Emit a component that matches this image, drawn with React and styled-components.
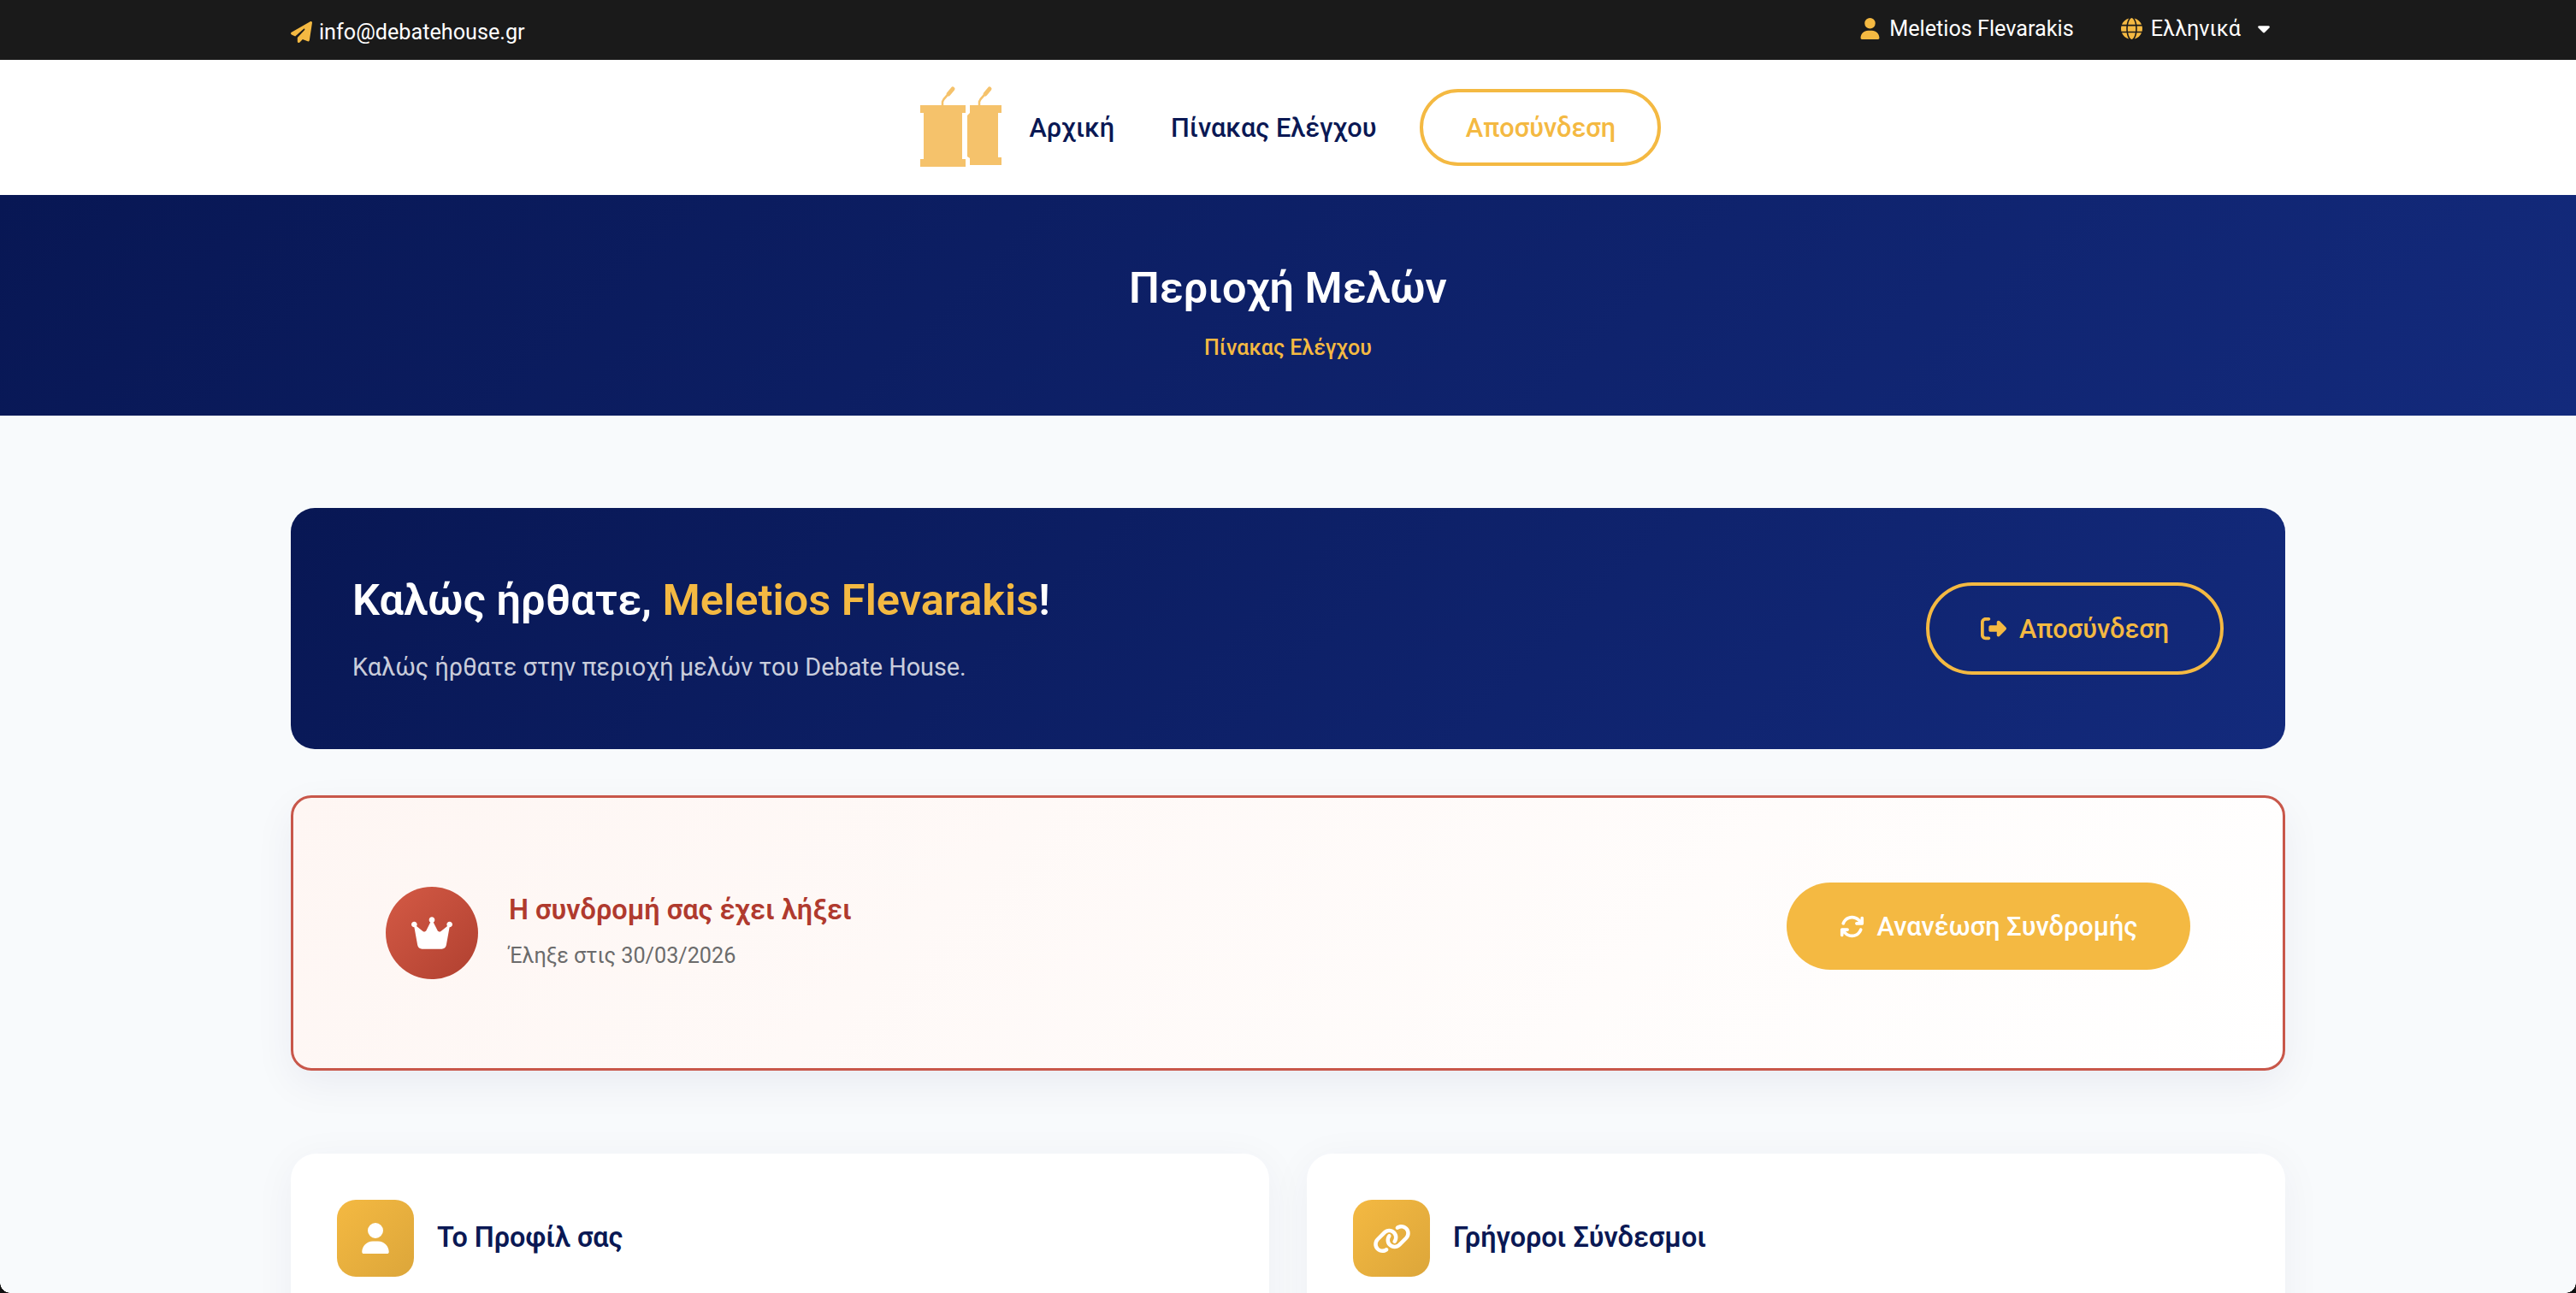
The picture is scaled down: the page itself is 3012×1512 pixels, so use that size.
import React from "react";
import styled, { createGlobalStyle } from "styled-components";
import { FaPaperPlane, FaUser, FaGlobe, FaCaretDown, FaRightFromBracket, FaCrown, FaArrowsRotate, FaLink } from "react-icons/fa6";

const GOLD = "#f4b942";
const NAVY = "#0a1854";

const Global = createGlobalStyle`
  html, body { margin: 0; padding: 0; background: #f8fafc; }
  body { font-family: Roboto, "Noto Sans", sans-serif; height: 1512px; overflow: hidden; }
  * { box-sizing: border-box; }
`;

const Page = styled.div`
  position: relative;
  height: 1512px;
  overflow: hidden;
`;

const Corner = styled.div`
  position: absolute;
  bottom: 0;
  ${(p) => (p.$side === "left" ? "left: 0;" : "right: 0;")}
  width: 12px;
  height: 12px;
  background: ${(p) =>
    `radial-gradient(circle at ${p.$side === "left" ? "100% 0" : "0 0"}, transparent 11.5px, #111 12px)`};
`;

const TopBar = styled.div`
  height: 70px;
  background: #1a1a1a;
  color: #fff;
  padding: 0 340px;
  display: flex;
  justify-content: space-between;
  font-size: 25.2px;
`;

const TopLeft = styled.div`
  display: flex;
  align-items: center;
  gap: 8px;
  padding-top: 5px;
`;

const TopRight = styled.div`
  display: flex;
  align-items: center;
  padding: 0 14px 4px 0;
  gap: 55px;
`;

const TopItem = styled.span`
  display: inline-flex;
  align-items: center;
  gap: 10px;
  svg { color: ${GOLD}; }
`;

const Caret = styled(FaCaretDown)`
  && { color: #fff; margin-left: 6px; }
`;

const Nav = styled.nav`
  height: 158px;
  background: #fff;
  display: flex;
  align-items: center;
  justify-content: center;
  padding-left: 6px;
`;

const Logo = styled.svg`
  width: 96px;
  height: 98px;
  margin: 0 32px 4px 0;
  flex: none;
`;

const NavLink = styled.a`
  font-size: 30.7px;
  font-weight: 500;
  color: ${NAVY};
  margin-right: ${(p) => p.$mr}px;
`;

const NavButton = styled.a`
  height: 90px;
  width: 282px;
  border: 4px solid ${GOLD};
  border-radius: 45px;
  color: ${GOLD};
  font-size: 30.7px;
  font-weight: 500;
  display: flex;
  align-items: center;
  justify-content: center;
`;

const Hero = styled.header`
  height: 258px;
  background: linear-gradient(135deg, #081754 0%, #132a7c 100%);
  display: flex;
  flex-direction: column;
  align-items: center;
  padding-top: 79px;
`;

const HeroTitle = styled.h1`
  margin: 0;
  font-size: 50.4px;
  line-height: 60px;
  font-weight: 600;
  color: #fff;
`;

const Crumb = styled.div`
  margin-top: 25px;
  font-size: 25px;
  line-height: 30px;
  font-weight: 500;
  color: ${GOLD};
`;

const Main = styled.main`
  padding: 108px 340px 0;
`;

const Welcome = styled.section`
  height: 282px;
  border-radius: 28px;
  background: linear-gradient(135deg, #081754 0%, #132a7c 100%);
  padding: 0 72px;
  display: flex;
  align-items: center;
  justify-content: space-between;
`;

const WelcomeTitle = styled.h2`
  margin: 0;
  font-size: 50.6px;
  line-height: 60px;
  font-weight: 600;
  color: #fff;
  span { color: ${GOLD}; }
`;

const WelcomeText = styled.p`
  margin: 30px 0 0;
  font-size: 28.8px;
  line-height: 36px;
  color: rgba(255, 255, 255, 0.8);
`;

const OutlineButton = styled.a`
  width: 348px;
  height: 108px;
  border: 4px solid ${GOLD};
  border-radius: 54px;
  color: ${GOLD};
  font-size: 30.7px;
  font-weight: 500;
  display: flex;
  align-items: center;
  justify-content: center;
  gap: 15px;
`;

const Expired = styled.section`
  margin-top: 54px;
  height: 322px;
  border: 3px solid #c8574a;
  border-radius: 24px;
  background: linear-gradient(135deg, #fef6f3 0%, #ffffff 100%);
  box-shadow: 0 16px 48px rgba(10, 24, 84, 0.06);
  padding: 0 108px;
  display: flex;
  align-items: center;
  justify-content: space-between;
`;

const ExpiredLeft = styled.div`
  display: flex;
  align-items: center;
  gap: 36px;
`;

const ExpiredCopy = styled.div`
  padding-bottom: 4px;
`;

const CrownCircle = styled.div`
  width: 108px;
  height: 108px;
  border-radius: 50%;
  background: linear-gradient(135deg, #d45a45, #b04030);
  color: #fff;
  font-size: 48px;
  display: flex;
  align-items: center;
  justify-content: center;
`;

const ExpiredTitle = styled.h3`
  margin: 0;
  font-size: 32.5px;
  line-height: 40px;
  font-weight: 600;
  color: #b03a2e;
`;

const ExpiredText = styled.p`
  margin: 18px 0 0;
  font-size: 25.2px;
  line-height: 32px;
  color: #6b6b6b;
`;

const RenewButton = styled.a`
  width: 472px;
  height: 102px;
  margin-bottom: 16px;
  border-radius: 51px;
  background: ${GOLD};
  color: #fff;
  font-size: 30.7px;
  font-weight: 500;
  display: flex;
  align-items: center;
  justify-content: center;
  gap: 15px;
`;

const Grid = styled.div`
  margin-top: 97px;
  display: grid;
  grid-template-columns: 1fr 1fr;
  gap: 44px;
`;

const Card = styled.section`
  height: 400px;
  background: #fff;
  border-radius: 30px;
  box-shadow: 0 8px 48px rgba(10, 24, 84, 0.05);
  padding: 54px;
`;

const CardHead = styled.div`
  display: flex;
  align-items: center;
  gap: 27px;
`;

const CardIcon = styled.div`
  width: 90px;
  height: 90px;
  border-radius: 22px;
  background: linear-gradient(135deg, ${GOLD}, #dca63a);
  color: #fff;
  display: flex;
  align-items: center;
  justify-content: center;
`;

const CardTitle = styled.h3`
  margin: 0 0 2px;
  font-size: 32.4px;
  font-weight: 600;
  color: ${NAVY};
`;

function PodiumLogo() {
  return (
    <Logo viewBox="0 0 96 98" fill="#f5c26b">
      <path d="M0 25h53v9h-4v54h4v9H0v-9h4V34H0z" />
      <path d="M58 25h37v9h-4v52h4v9H58v-8l-3-2V37l3-3z" />
      <g stroke="#f5c26b" fill="none" strokeLinecap="round">
        <path d="M26 25v-4q1-3 5-7" strokeWidth="2.5" />
        <path d="M33 12l5-6" strokeWidth="5" />
        <path d="M69 25v-4q1-3 5-7" strokeWidth="2.5" />
        <path d="M76 12l5-6" strokeWidth="5" />
      </g>
    </Logo>
  );
}

export default function App() {
  return (
    <Page>
      <Global />
      <TopBar>
        <TopLeft>
          <FaPaperPlane color={GOLD} size={25} />
          info@debatehouse.gr
        </TopLeft>
        <TopRight>
          <TopItem>
            <FaUser size={25} />
            Meletios Flevarakis
          </TopItem>
          <TopItem>
            <FaGlobe size={25} />
            Ελληνικά
            <Caret size={22} />
          </TopItem>
        </TopRight>
      </TopBar>
      <Nav>
        <PodiumLogo />
        <NavLink $mr={66}>Αρχική</NavLink>
        <NavLink $mr={51}>Πίνακας Ελέγχου</NavLink>
        <NavButton>Αποσύνδεση</NavButton>
      </Nav>
      <Hero>
        <HeroTitle>Περιοχή Μελών</HeroTitle>
        <Crumb>Πίνακας Ελέγχου</Crumb>
      </Hero>
      <Main>
        <Welcome>
          <div>
            <WelcomeTitle>
              Καλώς ήρθατε, <span>Meletios Flevarakis</span>!
            </WelcomeTitle>
            <WelcomeText>Καλώς ήρθατε στην περιοχή μελών του Debate House.</WelcomeText>
          </div>
          <OutlineButton>
            <FaRightFromBracket size={30} />
            Αποσύνδεση
          </OutlineButton>
        </Welcome>
        <Expired>
          <ExpiredLeft>
            <CrownCircle>
              <FaCrown />
            </CrownCircle>
            <ExpiredCopy>
              <ExpiredTitle>Η συνδρομή σας έχει λήξει</ExpiredTitle>
              <ExpiredText>Έληξε στις 30/03/2026</ExpiredText>
            </ExpiredCopy>
          </ExpiredLeft>
          <RenewButton>
            <FaArrowsRotate size={29} />
            Ανανέωση Συνδρομής
          </RenewButton>
        </Expired>
        <Grid>
          <Card>
            <CardHead>
              <CardIcon>
                <FaUser size={36} />
              </CardIcon>
              <CardTitle>Το Προφίλ σας</CardTitle>
            </CardHead>
          </Card>
          <Card>
            <CardHead>
              <CardIcon>
                <FaLink size={45} />
              </CardIcon>
              <CardTitle>Γρήγοροι Σύνδεσμοι</CardTitle>
            </CardHead>
          </Card>
        </Grid>
      </Main>
      <Corner $side="left" />
      <Corner $side="right" />
    </Page>
  );
}
